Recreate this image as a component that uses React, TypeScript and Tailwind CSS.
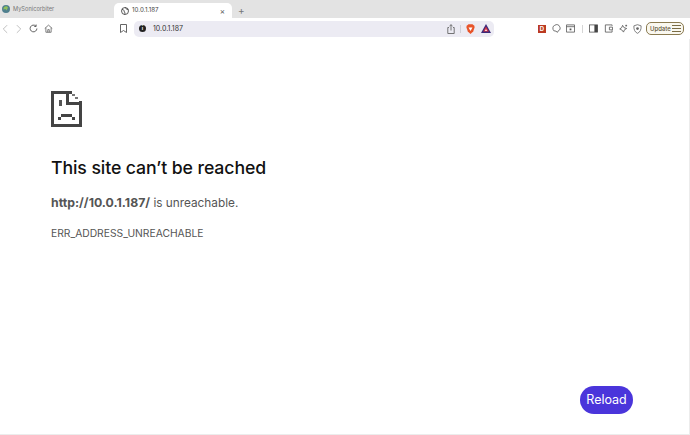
const sans = 'font-["Inter","Liberation_Sans",sans-serif]'

function Globe() {
  return (
    <svg width="8" height="8" viewBox="0 0 16 16" fill="none" stroke="#333" strokeWidth="1.6">
      <circle cx="8" cy="8" r="7" />
      <path d="M2 5c3 0 4 1 4 3s2 2 2 4-1 2-1 3M9 1c0 2 1 2 2 3s3 0 4 2" />
    </svg>
  )
}

function Chevron({ left, color }: { left?: boolean; color: string }) {
  return (
    <svg width="6" height="10" viewBox="0 0 7 10" fill="none" stroke={color} strokeWidth="1">
      <path d={left ? 'M6 .5 1.500 5 6 9.500' : 'M1 .5 5.500 5 1 9.500'} />
    </svg>
  )
}

function SadTab() {
  return (
    <svg width="31" height="36" viewBox="0 0 31 36" fill="#444" shapeRendering="crispEdges">
      <rect x="0" y="0" width="3" height="36" />
      <rect x="0" y="33" width="31" height="3" />
      <rect x="28" y="10" width="3" height="26" />
      <rect x="0" y="0" width="21" height="3" />
      <rect x="15" y="0" width="3" height="14" />
      <rect x="15" y="11" width="16" height="3" />
      <rect x="21" y="3" width="3" height="2" fill="#777" />
      <rect x="24" y="6" width="3" height="2" fill="#777" />
      <rect x="8" y="9" width="3" height="6" fill="#555" />
      <rect x="10" y="23" width="11" height="2.500" />
      <rect x="7" y="26" width="3" height="2.500" />
      <rect x="21" y="26" width="3" height="2.500" />
    </svg>
  )
}

export default function App() {
  return (
    <div className={`w-[690px] h-[435px] flex flex-col bg-white overflow-hidden ${sans}`}>
      {/* Tab strip */}
      <div className="h-[18px] shrink-0 bg-[#e3e3e3] flex items-end pl-[2px]">
        <div className="w-[112px] h-[18px] flex items-center gap-[3px]">
          <svg width="8" height="8" viewBox="0 0 16 16">
            <circle cx="8" cy="8" r="8" fill="#4f7f8e" />
            <path d="M3 9a5 5 0 0 1 9-4l-3 6-2-3z" fill="#8fc25a" />
          </svg>
          <span className="text-[5.7px] text-[#777] leading-none">MySonicorbiter</span>
        </div>
        <div className="w-[118px] h-[15px] bg-white rounded-t-[5px] flex items-center pl-[7px] pr-[7px] gap-[3px]">
          <Globe />
          <span className="text-[6.200px] text-[#444] leading-none">10.0.1.187</span>
          <span className="ml-auto text-[8px] text-[#555] leading-none">×</span>
        </div>
        <span className="ml-[6px] mb-[3px] text-[10px] text-[#777] leading-none">+</span>
      </div>

      {/* Toolbar */}
      <div className="h-[21px] shrink-0 bg-white flex items-center pl-[2px]">
        <Chevron left color="#b5b5b5" />
        <div className="ml-[8px]"><Chevron color="#b5b5b5" /></div>
        <svg className="ml-[7px]" width="9" height="9" viewBox="0 0 12 12" fill="none" stroke="#444" strokeWidth="1.100">
          <path d="M10.500 6A4.500 4.500 0 1 1 9 2.600M9.500.7v2.600H7" />
        </svg>
        <svg className="ml-[6px]" width="9" height="9" viewBox="0 0 12 12" fill="none" stroke="#555" strokeWidth="1">
          <path d="M1 6 6 1.500 11 6M2.500 5v6h7V5M5 11V7.500h2V11" />
        </svg>
        <svg className="ml-[67px]" width="7" height="9" viewBox="0 0 7 9" fill="none" stroke="#555" strokeWidth="0.9">
          <path d="M.5.5h6v8L3.500 6.500.5 8.500z" />
        </svg>
        <div className="ml-[7px] w-[360px] h-[16px] bg-[#ecebf3] rounded-[5px] flex items-center pl-[5px] pr-[3px]">
          <span className="w-[7px] h-[7px] rounded-full bg-[#222] flex items-center justify-center text-[5px] text-white font-bold leading-none">i</span>
          <span className="ml-[7px] text-[7px] text-[#333] leading-none">10.0.1.187</span>
          <svg className="ml-auto" width="8" height="10" viewBox="0 0 8 10" fill="none" stroke="#666" strokeWidth="0.9">
            <path d="M2 3.500H.8v6h6.400v-6H6M4 6.500V.8M2.500 2 4 .7 5.500 2" />
          </svg>
          <span className="ml-[5px] w-px h-[8px] bg-[#cfcfd6]" />
          <svg className="ml-[5px]" width="9" height="10" viewBox="0 0 9 10">
            <path d="M1 1.500 2.500.3h4L8 1.500l.7 1.500-1.500 4.500L4.500 10 1.800 7.500.3 3z" fill="#e8542a" />
            <path d="M2.500 3.500h4L4.500 7z" fill="#fff" />
          </svg>
          <svg className="ml-[6px]" width="10" height="9" viewBox="0 0 10 9">
            <path d="M5 0 10 9H0z" fill="#3b2a7a" />
            <path d="M5 2.500 7.800 7.500H2.200z" fill="#d9323f" />
            <path d="M5 5 6 7H4z" fill="#fff" />
          </svg>
        </div>
        <span className="ml-[44px] w-[8px] h-[8px] bg-[#bb3a22] flex items-center justify-center text-[6px] font-bold text-white leading-none">D</span>
        <svg className="ml-[6px]" width="9" height="9" viewBox="0 0 10 10" fill="none" stroke="#555" strokeWidth="0.9">
          <path d="M2 7.500C.5 6 .5 2 3 1.500 5-.2 8 .8 8.500 3c1.200 1.500.5 4-1.500 4.500L6 9.300 4.500 8z" />
        </svg>
        <svg className="ml-[5px]" width="9" height="9" viewBox="0 0 10 10" fill="none" stroke="#555" strokeWidth="0.9">
          <path d="M.5 1h9v8h-9zM.5 3h9" />
          <rect x="4" y="5" width="2" height="2" fill="#555" stroke="none" />
        </svg>
        <span className="ml-[7px] w-px h-[8px] bg-[#d5d5d5]" />
        <svg className="ml-[6px]" width="9" height="9" viewBox="0 0 10 10">
          <rect x=".5" y="1" width="9" height="8" fill="none" stroke="#555" strokeWidth="0.9" />
          <rect x="6" y="1" width="3.500" height="8" fill="#444" />
        </svg>
        <svg className="ml-[6px]" width="9" height="9" viewBox="0 0 10 10" fill="none" stroke="#555" strokeWidth="0.9">
          <path d="M9 2V1H1.500v8H9V7M9.500 3.500H6v3h3.500z" />
        </svg>
        <svg className="ml-[6px]" width="9" height="9" viewBox="0 0 10 10" fill="none" stroke="#555" strokeWidth="0.9">
          <path d="M4 1.500 5.500 4 8.500 5 6 6.500 5 9 3 6.500.8 5.500 3 4z" />
          <path d="M8 .8v2M7 1.800h2" />
        </svg>
        <svg className="ml-[5px]" width="9" height="10" viewBox="0 0 10 11" fill="none" stroke="#666" strokeWidth="0.9">
          <path d="M1 2 5 .7 9 2c.3 4-1 7-4 8.300C2 9 .7 6 1 2z" />
          <circle cx="5" cy="5" r="1.500" fill="#666" stroke="none" />
        </svg>
        <div className="ml-[4px] w-[38px] h-[13px] rounded-[5px] border border-[#8a7a50] flex items-center justify-between pl-[3px] pr-[2px] bg-[#faf8f0]">
          <span className="text-[6px] font-medium text-[#5c5338] leading-none">Update</span>
          <span className="w-[9px] h-[7px] border-y border-[#7a6c45] flex items-center">
            <span className="w-full h-px bg-[#7a6c45]" />
          </span>
        </div>
      </div>

      {/* Error page */}
      <main className="flex-1 min-h-0 flex flex-col pl-[51px] pt-[52px] border-b border-r border-[#ececec]">
        <SadTab />
        <h1 className="mt-[30px] text-[17.700px] leading-[22px] font-medium text-[#111] tracking-[-0.1px]">This site can’t be reached</h1>
        <p className="mt-[15px] text-[11.800px] leading-[17px] text-[#555]">
          <b className="text-[12.300px] font-bold text-[#555]">http://10.0.1.187/</b> is unreachable.
        </p>
        <p className="mt-[15px] text-[10.300px] leading-[13px] text-[#555]">ERR_ADDRESS_UNREACHABLE</p>
        <button className="mt-auto mb-[20px] mr-[56px] self-end w-[53px] h-[28px] rounded-[14px] bg-[#4a35db] text-white text-[12.500px] leading-none">
          Reload
        </button>
      </main>
    </div>
  )
}
